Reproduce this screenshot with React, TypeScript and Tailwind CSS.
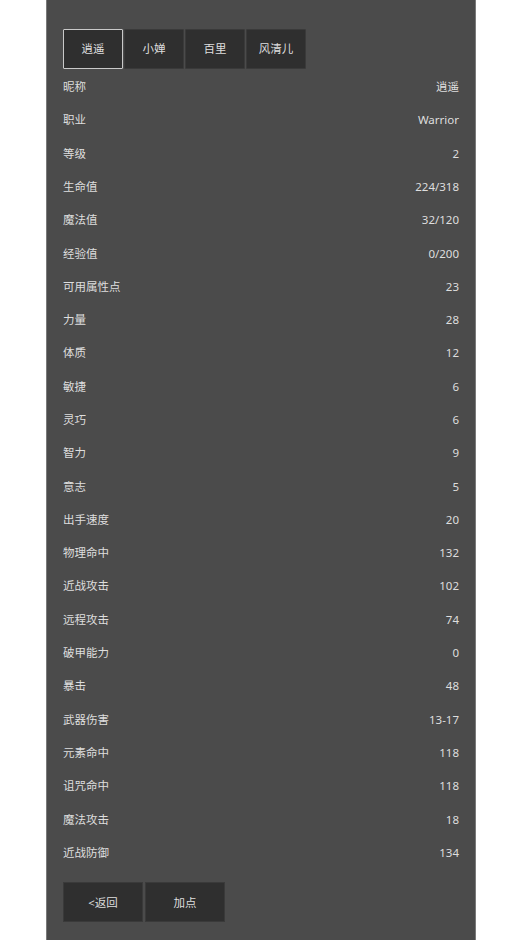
import React, { useState } from "react";

const tabs = ["逍遥", "小婵", "百里", "风清儿"];

const stats: [string, string][] = [
  ["昵称", "逍遥"],
  ["职业", "Warrior"],
  ["等级", "2"],
  ["生命值", "224/318"],
  ["魔法值", "32/120"],
  ["经验值", "0/200"],
  ["可用属性点", "23"],
  ["力量", "28"],
  ["体质", "12"],
  ["敏捷", "6"],
  ["灵巧", "6"],
  ["智力", "9"],
  ["意志", "5"],
  ["出手速度", "20"],
  ["物理命中", "132"],
  ["近战攻击", "102"],
  ["远程攻击", "74"],
  ["破甲能力", "0"],
  ["暴击", "48"],
  ["武器伤害", "13-17"],
  ["元素命中", "118"],
  ["诅咒命中", "118"],
  ["魔法攻击", "18"],
  ["近战防御", "134"],
];

export default function App() {
  const [active, setActive] = useState(0);

  return (
    <div
      className="min-h-screen bg-white"
      style={{ fontFamily: '"Noto Sans", "Noto Sans CJK SC", sans-serif' }}
    >
      <div className="ml-[46px] min-h-[940px] w-[430px] border-x border-[#7a7a7a] bg-[#4b4b4b] px-4 pt-[29px] pb-4 text-[11.5px] text-[#dedede]">
        {/* Character tabs */}
        <div className="flex gap-px">
          {tabs.map((name, i) => (
            <button
              key={name}
              onClick={() => setActive(i)}
              className={`flex h-10 w-[60px] items-center justify-center rounded-[1px] border bg-[#2f2f2f] ${
                i === active ? "border-[#c9c9c9]" : "border-[#3a3a3a]"
              }`}
            >
              {name}
            </button>
          ))}
        </div>

        {/* Stats */}
        <div className="pt-px">
          {stats.map(([label, value]) => (
            <div key={label} className="flex h-[33.3px] items-center justify-between">
              <span>{label}</span>
              <span>{value}</span>
            </div>
          ))}
        </div>

        {/* Actions */}
        <div className="mt-[13px] flex gap-0.5">
          <button className="flex h-10 w-20 items-center justify-center border border-[#3a3a3a] bg-[#2f2f2f]">
            &lt;返回
          </button>
          <button className="flex h-10 w-20 items-center justify-center border border-[#3a3a3a] bg-[#2f2f2f]">
            加点
          </button>
        </div>
      </div>
    </div>
  );
}
